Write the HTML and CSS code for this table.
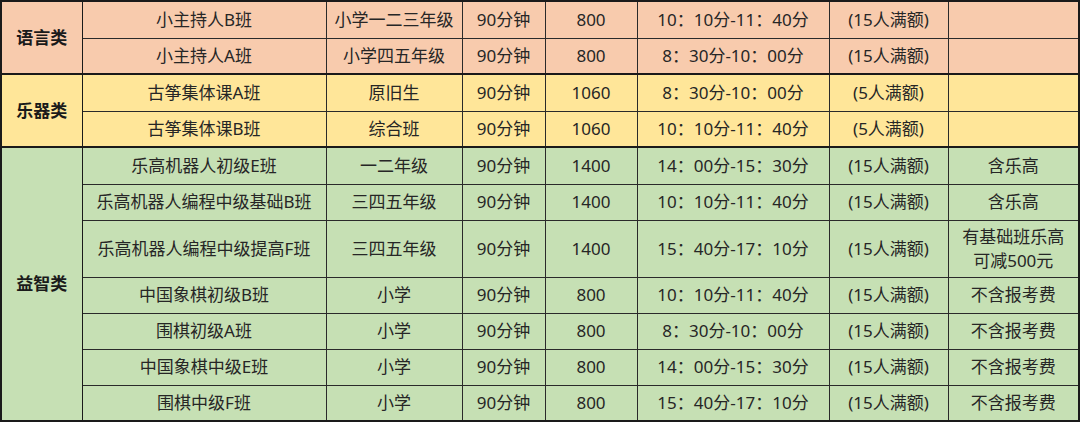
FILE: index.html
```html
<!DOCTYPE html>
<html lang="zh">
<head>
<meta charset="utf-8">
<link rel="stylesheet" href="styles.css">
</head>
<body>
<table class="sched">
  <colgroup>
    <col class="c-cat"><col class="c-name"><col class="c-grade"><col class="c-dur"><col class="c-fee"><col class="c-time"><col class="c-cap"><col class="c-note">
  </colgroup>
  <tbody class="lang">
    <tr class="r first"><th rowspan="2">语言类</th><td>小主持人B班</td><td>小学一二三年级</td><td>90分钟</td><td>800</td><td>10：10分-11：40分</td><td>(15人满额)</td><td></td></tr>
    <tr class="r"><td>小主持人A班</td><td>小学四五年级</td><td>90分钟</td><td>800</td><td>8：30分-10：00分</td><td>(15人满额)</td><td></td></tr>
  </tbody>
  <tbody class="music">
    <tr class="r first"><th rowspan="2">乐器类</th><td>古筝集体课A班</td><td>原旧生</td><td>90分钟</td><td>1060</td><td>8：30分-10：00分</td><td>(5人满额)</td><td></td></tr>
    <tr class="r"><td>古筝集体课B班</td><td>综合班</td><td>90分钟</td><td>1060</td><td>10：10分-11：40分</td><td>(5人满额)</td><td></td></tr>
  </tbody>
  <tbody class="mind">
    <tr class="r first"><th rowspan="7">益智类</th><td>乐高机器人初级E班</td><td>一二年级</td><td>90分钟</td><td>1400</td><td>14：00分-15：30分</td><td>(15人满额)</td><td>含乐高</td></tr>
    <tr class="r"><td>乐高机器人编程中级基础B班</td><td>三四五年级</td><td>90分钟</td><td>1400</td><td>10：10分-11：40分</td><td>(15人满额)</td><td>含乐高</td></tr>
    <tr class="r tall"><td>乐高机器人编程中级提高F班</td><td>三四五年级</td><td>90分钟</td><td>1400</td><td>15：40分-17：10分</td><td>(15人满额)</td><td>有基础班乐高<br>可减500元</td></tr>
    <tr class="r"><td>中国象棋初级B班</td><td>小学</td><td>90分钟</td><td>800</td><td>10：10分-11：40分</td><td>(15人满额)</td><td>不含报考费</td></tr>
    <tr class="r"><td>围棋初级A班</td><td>小学</td><td>90分钟</td><td>800</td><td>8：30分-10：00分</td><td>(15人满额)</td><td>不含报考费</td></tr>
    <tr class="r"><td>中国象棋中级E班</td><td>小学</td><td>90分钟</td><td>800</td><td>14：00分-15：30分</td><td>(15人满额)</td><td>不含报考费</td></tr>
    <tr class="r last"><td>围棋中级F班</td><td>小学</td><td>90分钟</td><td>800</td><td>15：40分-17：10分</td><td>(15人满额)</td><td>不含报考费</td></tr>
  </tbody>
</table>
</body>
</html>
```

FILE: styles.css
```css
html, body {
  margin: 0;
  padding: 0;
  background: #ffffff;
}

.sched {
  border-collapse: collapse;
  table-layout: fixed;
  width: 1078px;
  font-family: "Noto Sans", "Noto Sans CJK SC", sans-serif;
  font-size: 17px;
  color: #262626;
  border: 2px solid #1a1a1a;
}

.c-cat { width: 81px; }
.c-name { width: 244px; }
.c-grade { width: 136px; }
.c-dur { width: 83px; }
.c-fee { width: 92px; }
.c-time { width: 192px; }
.c-cap { width: 119px; }
.c-note { width: 131px; }

.sched td, .sched th {
  border: 1px solid #2a2a2a;
  text-align: center;
  vertical-align: middle;
  padding: 0 2px;
  line-height: 24px;
  white-space: nowrap;
}

.sched th {
  font-weight: bold;
  color: #1a1a1a;
  border-right: 1px solid #1a1a1a;
}

.sched td:nth-child(2), .sched tr.first td:nth-child(3) {
  border-left-color: #6b6b5e;
}

.sched tr.r { height: 36px; }
.sched tr.first { height: 37px; }
.sched tr.tall { height: 57px; }
.sched tr.last { height: 36px; }

.sched tr.first > td, .sched tr.first > th {
  border-top: 2px solid #1a1a1a;
}

.sched td:nth-child(7) { border-left-color: #7a7868; }
.sched tr:not(.first) td:nth-child(6) { border-left-color: #7a7868; }

.lang td, .lang th { background: #f8cbad; }
.music td, .music th { background: #ffe699; }
.mind td, .mind th { background: #c6e0b4; }
```
